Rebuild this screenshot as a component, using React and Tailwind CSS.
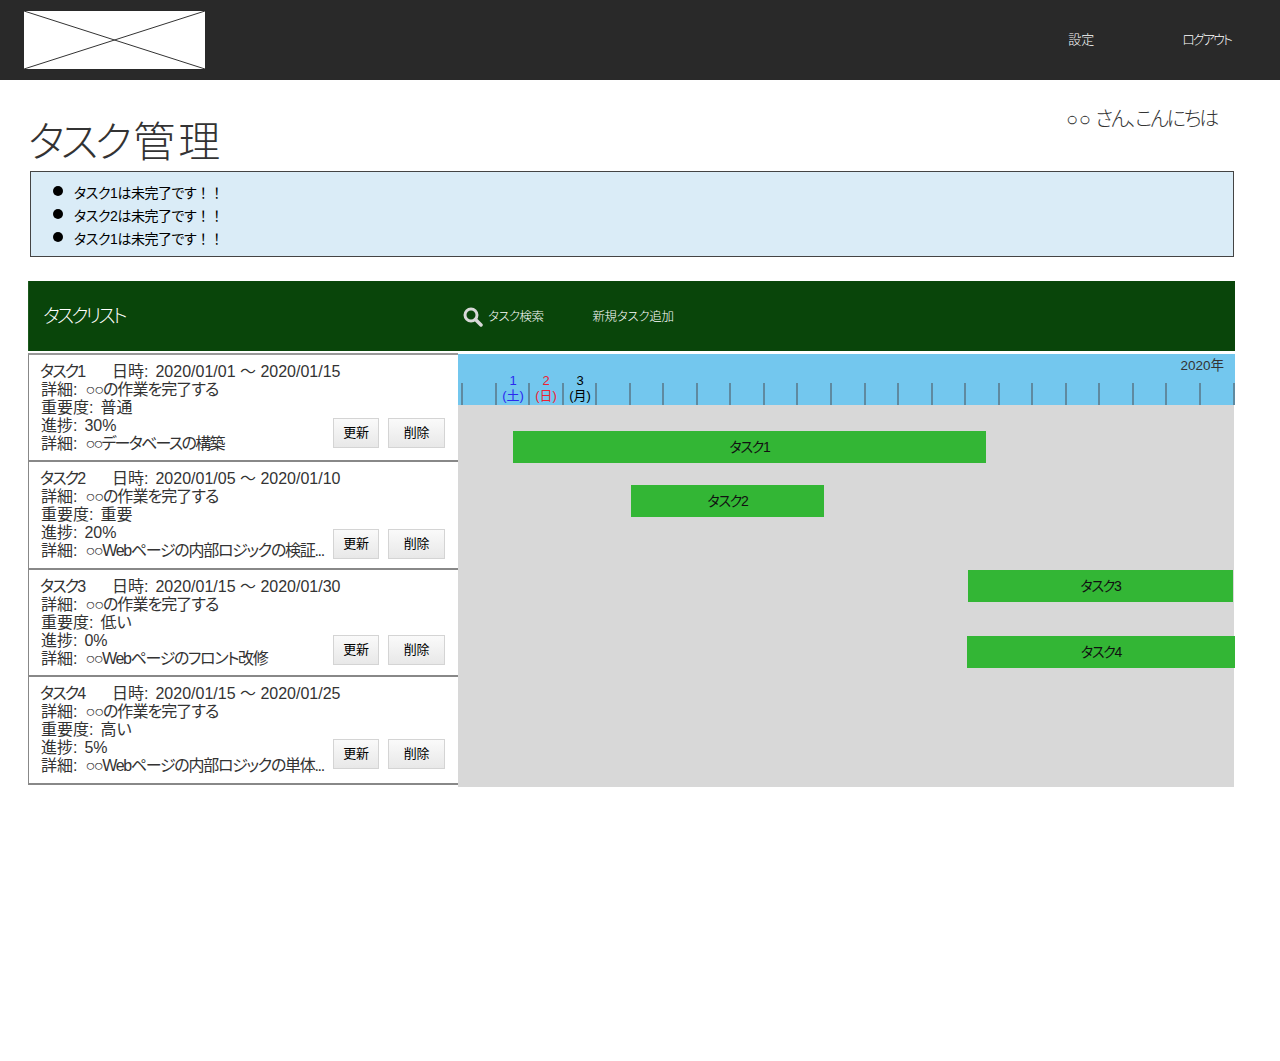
const font = { fontFamily: '"Liberation Sans", "Noto Sans CJK JP", sans-serif' };
const tasks = [
  { n: "タスク1", d: "2020/01/01 ～ 2020/01/15", imp: "普通", p: "30%", det: "○○データベースの構築", h: "h-[107px]", mb: "mb-[12px]", pb: "pb-[7px]", tr: "tracking-[-1.7px]" },
  { n: "タスク2", d: "2020/01/05 ～ 2020/01/10", imp: "重要", p: "20%", det: "○○Webページの内部ロジックの検証...", h: "h-[108px]", mb: "mb-[9px]", pb: "pb-[8px]", tr: "tracking-[-1.3px]" },
  { n: "タスク3", d: "2020/01/15 ～ 2020/01/30", imp: "低い", p: "0%", det: "○○Webページのフロント改修", h: "h-[107px]", mb: "mb-[10px]", pb: "pb-[7px]", tr: "tracking-[-1.35px]" },
  { n: "タスク4", d: "2020/01/15 ～ 2020/01/25", imp: "高い", p: "5%", det: "○○Webページの内部ロジックの単体...", h: "h-[108px]", mb: "mb-[14px]", pb: "pb-[8px]", tr: "tracking-[-1.3px]" },
];
const ticks = Array.from({ length: 24 });
const Btn = ({ w, children }) => (
  <div className={`${w} h-[30px] flex items-center justify-center border border-[#d4d4d4] bg-gradient-to-b from-[#fafafa] to-[#e8e8e8] text-[13px] text-black pb-[1px] tracking-[-0.3px]`}>{children}</div>
);
const Bar = ({ cls, children }) => (
  <div className={`absolute h-[32px] bg-[#33b635] flex items-center justify-center text-[14px] text-[#111] tracking-[-1.2px] ${cls}`}>{children}</div>
);
export default function App() {
  return (
    <div style={font} className="h-[1061px] bg-white text-[#333] [font-feature-settings:'palt'] overflow-hidden">
      <header className="h-20 bg-[#292929] flex items-center pl-6 pr-[49px] justify-between">
        <svg width="181" height="58" viewBox="0 0 181 58" className="bg-white">
          <path d="M0 0L181 58M181 0L0 58" stroke="#333" strokeWidth="1" fill="none" />
        </svg>
        <div className="flex gap-[88px] text-white text-[13px] font-light">
          <span>設定</span>
          <span className="tracking-[-1.9px]">ログアウト</span>
        </div>
      </header>
      <div className="pl-7 w-[1235px]">
        <div className="h-[91px] flex justify-between pr-[18px]">
          <h1 className="text-[42px] leading-[50px] mt-[38px] font-light whitespace-nowrap">
            <span className="tracking-[-4px]">タスク</span>
            <span className="ml-[5px] tracking-[3px]">管理</span>
          </h1>
          <div className="text-[20px] font-light leading-[28px] mt-[25px] whitespace-nowrap">
            <span className="tracking-[0.5px] mr-[4px]">○○</span>
            <span className="tracking-[-2.2px]">さん、こんにちは</span>
          </div>
        </div>
        <div className="ml-[2px] h-[86px] w-[1204px] border border-[#444] bg-[#daecf7] pl-[22px] pt-[10px] text-black text-[14px]">
          {["タスク1は未完了です", "タスク2は未完了です", "タスク1は未完了です"].map((t, i) => (
            <div key={i} className="flex h-[23px] items-center gap-[11px]">
              <span className="w-[10px] h-[10px] rounded-full bg-black -mt-[5px]" />
              <span className="tracking-[-0.45px]">{t}<span className="[font-feature-settings:normal]">！！</span></span>
            </div>
          ))}
        </div>
        <div className="mt-6 h-[70px] bg-[#09450a] flex items-center text-white border-l border-[#1d5a1e]">
          <span className="ml-[14px] mt-[3px] w-[420px] text-[19px] font-light tracking-[-2.7px]">タスクリスト</span>
          <svg width="20" height="20" viewBox="0 0 20 20" fill="none" stroke="#d8d8d8" className="mt-[2px]">
            <circle cx="8" cy="8" r="6" strokeWidth="3" />
            <path d="M12.5 12.5L18 18" strokeWidth="3.5" strokeLinecap="round" />
          </svg>
          <span className="ml-[5px] mt-[2px] text-[12.5px] font-light tracking-[-0.6px]">タスク検索</span>
          <span className="ml-[49px] mt-[2px] text-[12.5px] font-light tracking-[-0.3px]">新規タスク追加</span>
        </div>
        <div className="mt-[3px] flex items-start">
          <div className="w-[430px] -mt-px border-l border-[#888] border-t-2 border-t-[#999] shrink-0">
            {tasks.map((t) => (
              <div key={t.n} className={`${t.h} border-b-2 border-[#888] flex items-end pl-3 bg-white`}>
                <div className={`w-[284px] ${t.pb} text-[16px] leading-[18px] shrink-0`}>
                  <div className="flex -ml-px whitespace-nowrap">
                    <span className="w-[72px] shrink-0 tracking-[-1.8px]">{t.n}</span>
                    <span className="mr-[7px]">日時:</span>
                    <span>{t.d}</span>
                  </div>
                  <div className="flex whitespace-nowrap"><span className="mr-[8px]">詳細:</span><span className="tracking-[-0.95px]">○○の作業を完了する</span></div>
                  <div className="flex whitespace-nowrap"><span className="mr-[7px]">重要度:</span><span>{t.imp}</span></div>
                  <div className="flex whitespace-nowrap"><span className="mr-[7px]">進捗:</span><span>{t.p}</span></div>
                  <div className="flex whitespace-nowrap"><span className="mr-[8px]">詳細:</span><span className={t.tr}>{t.det}</span></div>
                </div>
                <div className={`flex gap-[9px] ml-[8px] ${t.mb}`}>
                  <Btn w="w-[46px]">更新</Btn>
                  <Btn w="w-[57px]">削除</Btn>
                </div>
              </div>
            ))}
          </div>
          <div className="relative w-[776px] h-[433px] bg-[#d8d8d8]">
            <div className="relative h-[51px] w-[777px] bg-[#73c7ee]">
              <div className="absolute right-[11px] top-[3px] text-[13.5px] leading-[18px]">2020年</div>
              <div className="absolute left-[3px] bottom-0 flex items-end">
                {ticks.map((_, i) => (
                  <div key={i} className="w-[33.55px] h-[22px] border-l-2 border-[#5f8aa0] shrink-0" />
                ))}
              </div>
              <div className="absolute left-[38px] top-[19px] w-[34px] text-center text-[13px] leading-[15px] text-[#2a2aee]">1<br />(土)</div>
              <div className="absolute left-[71px] top-[19px] w-[34px] text-center text-[13px] leading-[15px] text-[#ee2233]">2<br />(日)</div>
              <div className="absolute left-[105px] top-[19px] w-[34px] text-center text-[13px] leading-[15px] text-black">3<br />(月)</div>
            </div>
            <Bar cls="left-[55px] top-[77px] w-[473px]">タスク1</Bar>
            <Bar cls="left-[173px] top-[131px] w-[193px]">タスク2</Bar>
            <Bar cls="left-[510px] top-[216px] w-[265px]">タスク3</Bar>
            <Bar cls="left-[509px] top-[282px] w-[268px]">タスク4</Bar>
          </div>
        </div>
      </div>
    </div>
  );
}
